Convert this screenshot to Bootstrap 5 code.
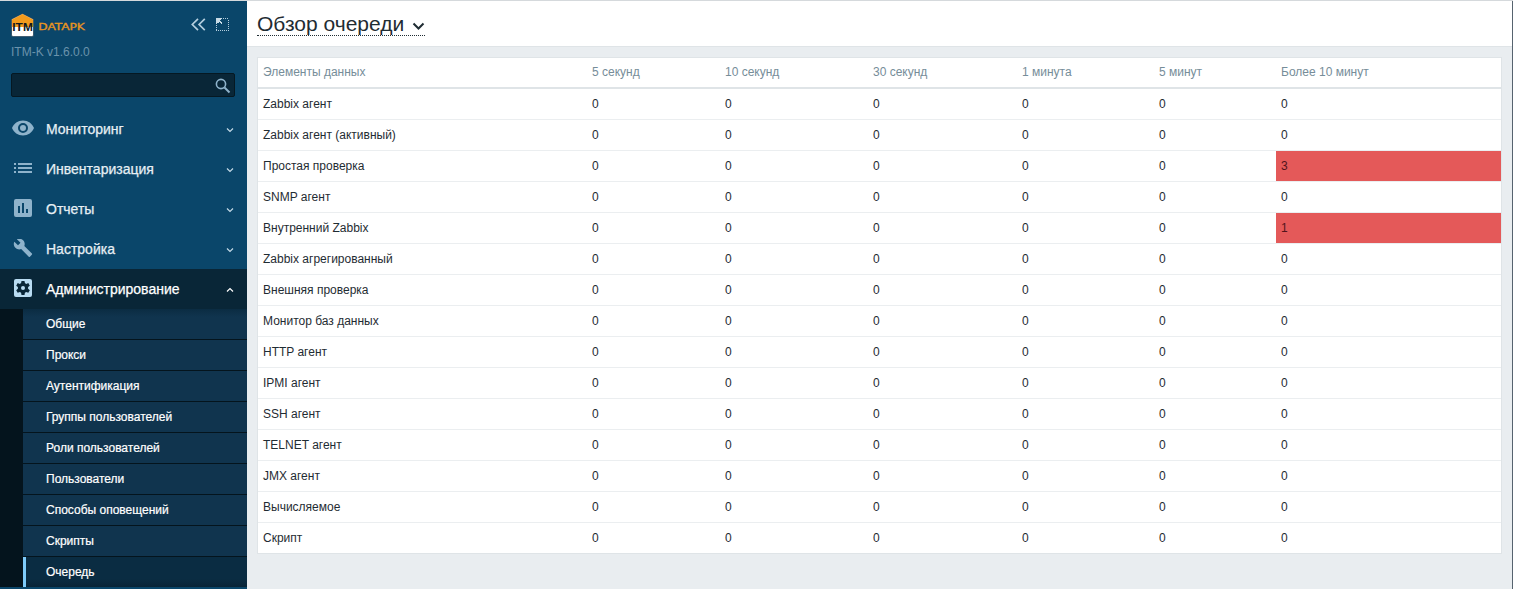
<!DOCTYPE html>
<html lang="ru">
<head>
<meta charset="utf-8">
<meta name="viewport" content="width=device-width, initial-scale=1">
<title>Обзор очереди</title>
<link href="https://cdn.jsdelivr.net/npm/bootstrap@5.3.0/dist/css/bootstrap.min.css" rel="stylesheet">
<style>
body{font-family:"Liberation Sans",Arial,sans-serif;font-size:12px;line-height:1.17;color:#1f2c33;background:#e9edf0;height:589px;overflow:hidden;border-top:1px solid #d5d9dc}
.app{height:588px;border-right:1px solid #56636f}
.side{width:247px;background:#0a466a;color:#fff}
.brand-row{height:50px;padding:12px 18px 0 11px}
.version{height:22px;padding:0 11px;font-size:12px;line-height:2px;color:#6b93ac}
.search{width:224px;height:24px;margin:0 0 12px 11px;background:#092637;border:1px solid #051822;border-radius:2px;padding:1px 3px 0 0}
.main-item{height:40px;padding:0 13px 0 13px;font-size:14px;color:#e6eff4;text-decoration:none;-webkit-text-stroke:.25px currentColor}
.main-item .ico{width:20px;height:20px;margin-right:13px;fill:#8fb3cb}
.main-item .caret{width:8px;height:6px;margin:2px 0 0 auto;fill:none;stroke:#c4dae7;stroke-width:1.2}
.main-item.open{background:#092637;color:#fff}
.main-item.open .ico{fill:#b9dcf2}
.main-item.open .caret{stroke:#fff}
.subwrap{background:#04141d;padding-left:23px}
.sub{height:31px;line-height:30px;padding-left:23px;background:#10344e;border-bottom:1px solid #04141d;color:#fff;text-decoration:none;-webkit-text-stroke:.2px currentColor}
.sub:first-child{background:linear-gradient(#0b2c42,#10344e 8px)}
.sub.current{height:30px;border-bottom:0;border-left:3px solid #7ecbfa;padding-left:20px;background:linear-gradient(#0a2c42 22px,#092437)}
.head{height:46px;border-bottom:1px solid #dfe4e7;padding:11px 0 0 10px}
.page-title{height:24px;font-size:21px;line-height:25px;border-bottom:1px dotted #1f2c33;color:#1f2c33}
.queue{width:1245px;margin:10px 0 0 10px;table-layout:fixed;border:1px solid #dfe4e7;border-collapse:separate;border-spacing:0;--bs-table-bg:#fff;--bs-table-color:#1f2c33;color:#1f2c33}
.queue>thead>tr>th{height:31px;padding:0 5px 2px;font-weight:400;color:#768d99;border-bottom:2px solid #dfe4e7;vertical-align:middle;line-height:14px}
.queue>tbody>tr>td{height:31px;padding:0 5px;border-bottom:1px solid #ebeef0;vertical-align:middle;line-height:14px}
.queue>tbody>tr:last-child>td{height:30px;border-bottom:0}
.queue>tbody>tr>td.late{background:#e45959;color:#52141b}
</style>
<script src="https://cdn.jsdelivr.net/npm/bootstrap@5.3.0/dist/js/bootstrap.bundle.min.js"></script>
</head>
<body>
<div class="app d-flex">
<aside class="side flex-shrink-0">
  <div class="brand-row d-flex align-items-start">
    <svg width="76" height="25" viewBox="0 0 76 25">
      <path d="M.5 6.2 11.500.7l11 5.500V22q0 1.600-1.600 1.600H2.100Q.5 23.600.5 22z" fill="#fff" stroke="#24445a" stroke-width=".8"/>
      <path d="M.9 6.400 11.500 1.100l10.600 5.300v7.600H.9z" fill="#f39b1d"/>
      <text x="1.300" y="17.500" font-family="Liberation Sans,sans-serif" font-weight="700" font-size="10" textLength="20.500" lengthAdjust="spacingAndGlyphs" fill="#101820">ITM</text>
      <text x="27.300" y="16.800" font-family="DejaVu Sans,sans-serif" font-size="8.600" textLength="46.500" lengthAdjust="spacingAndGlyphs" fill="#e8951f" stroke="#e8951f" stroke-width=".3">DATAPK</text>
    </svg>
    <svg class="ms-auto" width="15" height="15" viewBox="0 0 15 15" fill="none" stroke="#b4cede" stroke-width="1.700" style="margin-top:5px;margin-right:10px"><path d="M7 .8 1.300 6.500 7 12.200M13.800.8 8.100 6.500l5.700 5.700"/></svg>
    <svg width="13" height="13" viewBox="0 0 13 13" shape-rendering="crispEdges" style="margin-top:5px"><path d="M7 .5h6M12.500 2v11M0 12.500h12M.5 7v6" fill="none" stroke="#b4cede" stroke-dasharray="1 1"/><path d="M0 0h6v1H5v1H4v1h1v1h1v2H5V5H4V4H3v1H1v1H0z" fill="#c8dbe6"/></svg>
  </div>
  <div class="version">ITM-K v1.6.0.0</div>
  <div class="search d-flex align-items-center justify-content-end">
    <svg width="16" height="16" viewBox="0 0 16 16" fill="none" stroke="#8fb3cb"><circle cx="6" cy="6" r="4.600" stroke-width="1.600"/><path d="m9.500 9.500 5 5" stroke-width="2"/></svg>
  </div>
  <nav>
    <a class="main-item d-flex align-items-center"><svg class="ico" style="width:24px;height:24px;margin:0 11px 2px -2px" viewBox="0 0 24 24"><path d="M12 4.500C7 4.500 2.700 7.600 1 12c1.700 4.400 6 7.500 11 7.500s9.300-3.100 11-7.500c-1.700-4.400-6-7.500-11-7.500zM12 17a5 5 0 1 1 0-10 5 5 0 0 1 0 10zm0-8a3 3 0 1 0 0 6 3 3 0 0 0 0-6z"/></svg><span>Мониторинг</span><svg class="caret" viewBox="0 0 8 6"><path d="m1 1.500 3 3 3-3"/></svg></a>
    <a class="main-item d-flex align-items-center"><svg class="ico" viewBox="0 0 20 20"><path d="M1 4h2v2H1zm4 0h14v2H5zM1 8h2v2H1zm4 0h14v2H5zM1 12h2v2H1zm4 0h14v2H5z"/></svg><span>Инвентаризация</span><svg class="caret" viewBox="0 0 8 6"><path d="m1 1.500 3 3 3-3"/></svg></a>
    <a class="main-item d-flex align-items-center"><svg class="ico" viewBox="0 0 20 20"><path fill-rule="evenodd" d="M3 0h14a2 2 0 0 1 2 2v14a2 2 0 0 1-2 2H3a2 2 0 0 1-2-2V2a2 2 0 0 1 2-2zm2 7v7h2V7zm4-3v10h2V4zm4 6v4h2v-4z"/></svg><span>Отчеты</span><svg class="caret" viewBox="0 0 8 6"><path d="m1 1.500 3 3 3-3"/></svg></a>
    <a class="main-item d-flex align-items-center"><svg class="ico" viewBox="0 1.500 24 24"><path d="m22.700 19-9.100-9.100c.9-2.300.4-5-1.500-6.900-2-2-5-2.400-7.400-1.300L9 6 6 9 1.600 4.700C.4 7.100.9 10.100 2.900 12.100c1.900 1.900 4.600 2.400 6.900 1.500l9.100 9.100c.4.4 1 .4 1.400 0l2.300-2.300c.5-.4.5-1.100.1-1.400z"/></svg><span>Настройка</span><svg class="caret" viewBox="0 0 8 6"><path d="m1 1.500 3 3 3-3"/></svg></a>
    <a class="main-item open d-flex align-items-center"><svg class="ico" viewBox="0 0 20 20"><rect x="1" width="18" height="18" rx="2"/><path fill="#092637" d="M8.500 2h3l.4 2.100 1.300.8 2.100-.8 1.500 2.600-1.700 1.400v1.600l1.700 1.500-1.500 2.600-2.100-.8-1.300.8-.4 2.200h-3l-.4-2.200-1.300-.8-2.100.8-1.500-2.600 1.700-1.500V8.100L3.200 6.700l1.500-2.600 2.100.8 1.300-.8z"/><circle cx="10" cy="9" r="2"/></svg><span>Администрирование</span><svg class="caret" viewBox="0 0 8 6"><path d="m1 4.500 3-3 3 3"/></svg></a>
    <div class="subwrap">
      <a class="sub d-block">Общие</a><a class="sub d-block">Прокси</a><a class="sub d-block">Аутентификация</a><a class="sub d-block">Группы пользователей</a><a class="sub d-block">Роли пользователей</a><a class="sub d-block">Пользователи</a><a class="sub d-block">Способы оповещений</a><a class="sub d-block">Скрипты</a><a class="sub current d-block">Очередь</a>
    </div>
  </nav>
</aside>
<main class="flex-grow-1">
  <header class="head bg-white d-flex align-items-start">
    <h1 class="page-title fw-normal m-0 d-flex align-items-center"><span>Обзор очереди</span><svg width="13" height="9" viewBox="0 0 13 9" fill="none" stroke="#1f2c33" stroke-width="2" style="margin:5px 0 0 8px"><path d="m1.500 1.500 5 5 5-5"/></svg></h1>
  </header>
  <table class="queue table mb-0">
    <colgroup><col style="width:329px"><col style="width:133px"><col style="width:148px"><col style="width:149px"><col style="width:137px"><col style="width:122px"><col style="width:225px"></colgroup>
    <thead><tr><th>Элементы данных</th><th>5 секунд</th><th>10 секунд</th><th>30 секунд</th><th>1 минута</th><th>5 минут</th><th>Более 10 минут</th></tr></thead>
    <tbody>
      <tr><td>Zabbix агент</td><td>0</td><td>0</td><td>0</td><td>0</td><td>0</td><td>0</td></tr>
      <tr><td>Zabbix агент (активный)</td><td>0</td><td>0</td><td>0</td><td>0</td><td>0</td><td>0</td></tr>
      <tr><td>Простая проверка</td><td>0</td><td>0</td><td>0</td><td>0</td><td>0</td><td class="late">3</td></tr>
      <tr><td>SNMP агент</td><td>0</td><td>0</td><td>0</td><td>0</td><td>0</td><td>0</td></tr>
      <tr><td>Внутренний Zabbix</td><td>0</td><td>0</td><td>0</td><td>0</td><td>0</td><td class="late">1</td></tr>
      <tr><td>Zabbix агрегированный</td><td>0</td><td>0</td><td>0</td><td>0</td><td>0</td><td>0</td></tr>
      <tr><td>Внешняя проверка</td><td>0</td><td>0</td><td>0</td><td>0</td><td>0</td><td>0</td></tr>
      <tr><td>Монитор баз данных</td><td>0</td><td>0</td><td>0</td><td>0</td><td>0</td><td>0</td></tr>
      <tr><td>HTTP агент</td><td>0</td><td>0</td><td>0</td><td>0</td><td>0</td><td>0</td></tr>
      <tr><td>IPMI агент</td><td>0</td><td>0</td><td>0</td><td>0</td><td>0</td><td>0</td></tr>
      <tr><td>SSH агент</td><td>0</td><td>0</td><td>0</td><td>0</td><td>0</td><td>0</td></tr>
      <tr><td>TELNET агент</td><td>0</td><td>0</td><td>0</td><td>0</td><td>0</td><td>0</td></tr>
      <tr><td>JMX агент</td><td>0</td><td>0</td><td>0</td><td>0</td><td>0</td><td>0</td></tr>
      <tr><td>Вычисляемое</td><td>0</td><td>0</td><td>0</td><td>0</td><td>0</td><td>0</td></tr>
      <tr><td>Скрипт</td><td>0</td><td>0</td><td>0</td><td>0</td><td>0</td><td>0</td></tr>
    </tbody>
  </table>
</main>
</div>
</body>
</html>
